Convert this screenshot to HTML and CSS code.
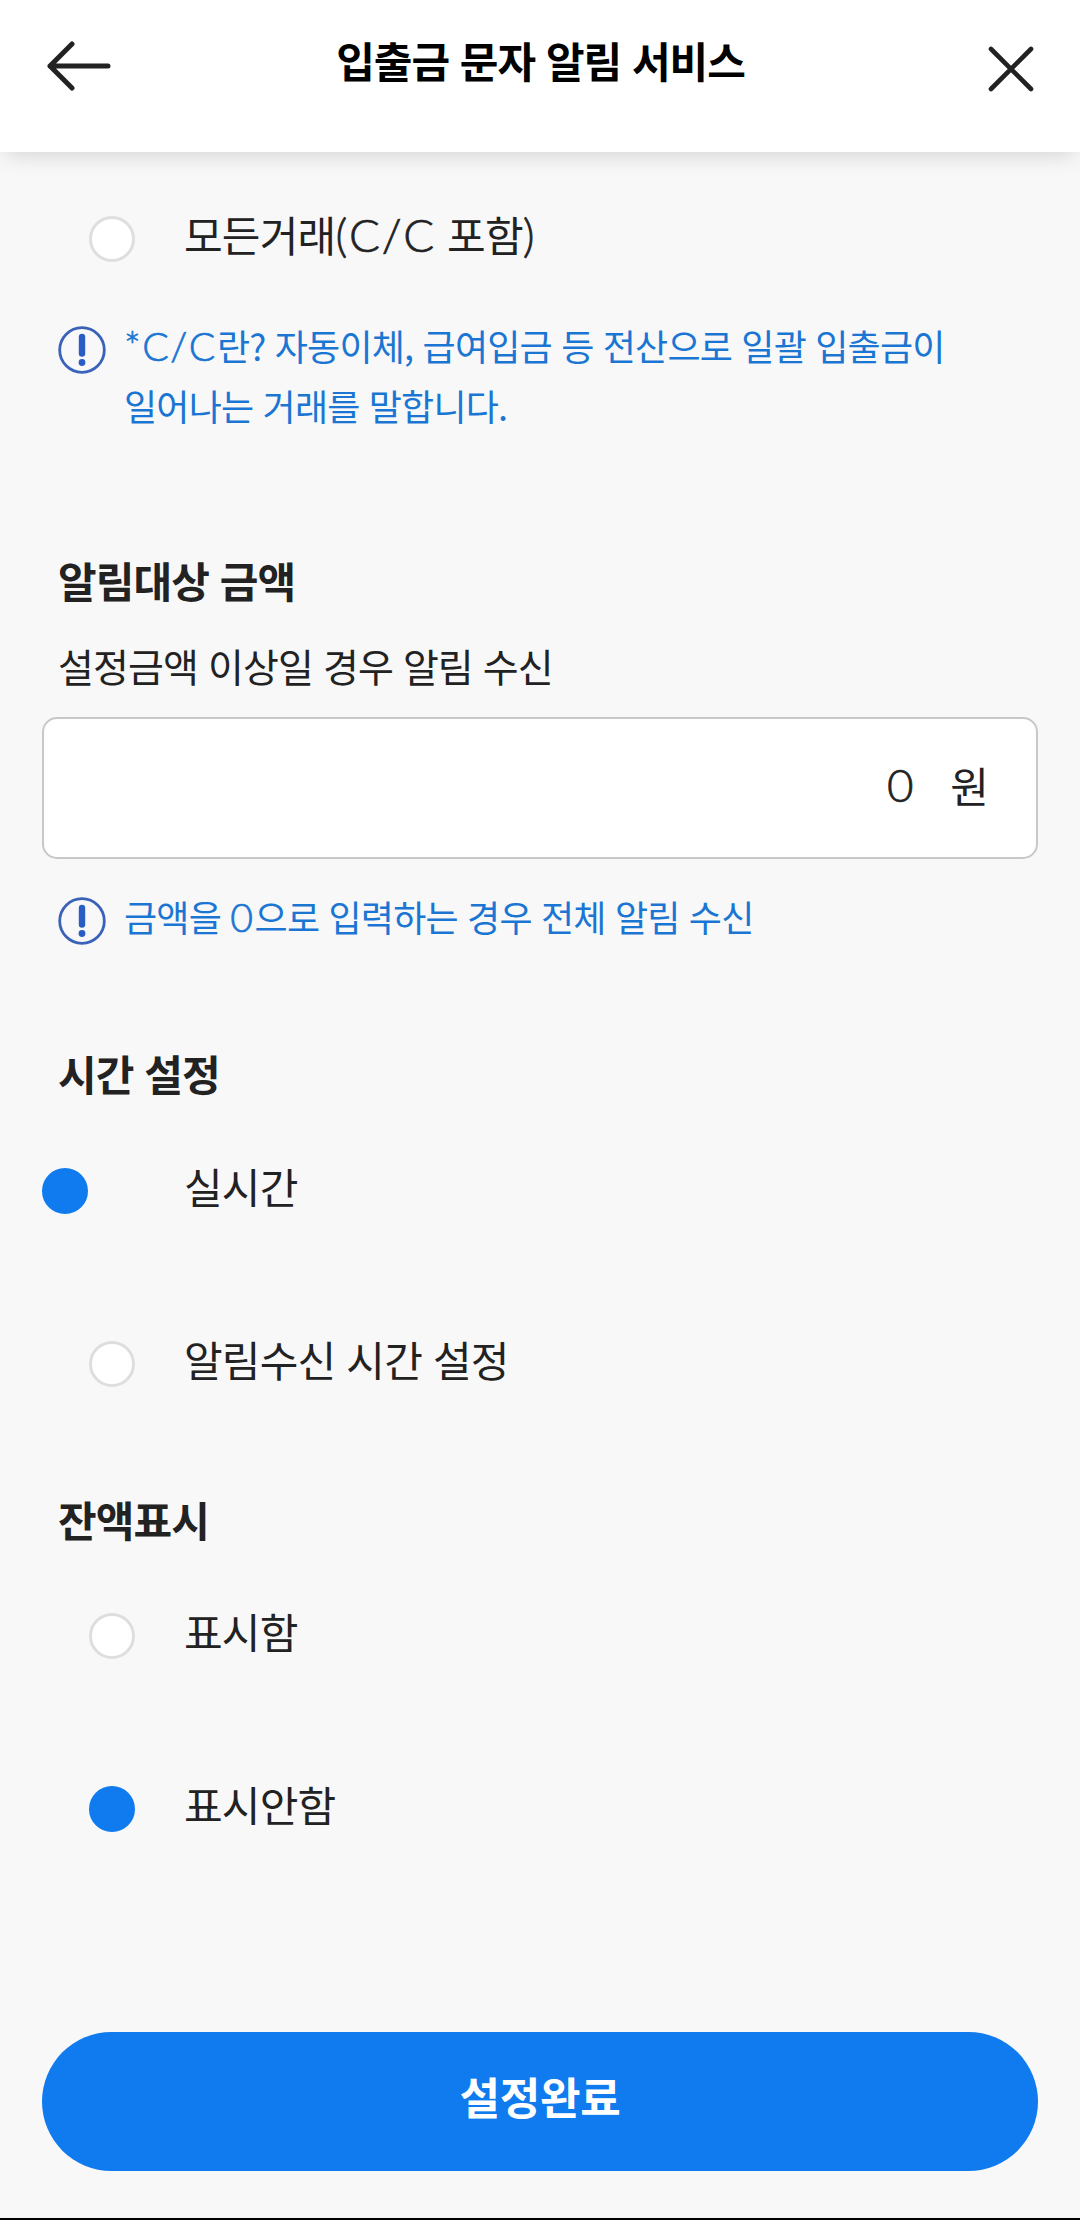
FILE: index.html
```html
<!DOCTYPE html>
<html lang="ko">
<head>
  <meta charset="UTF-8">
  <meta name="viewport" content="width=device-width, initial-scale=1.0">
  <title>입출금 문자 알림 서비스</title>
  <link rel="stylesheet" href="styles.css">
</head>
<body>
  <header class="header">
    <svg class="icon-back" viewBox="0 0 64 50" fill="none" stroke="#222" stroke-width="5" stroke-linecap="round" stroke-linejoin="round">
      <path d="M61 25H3M25 3L3 25L25 47"/>
    </svg>
    <h1 class="title">입출금 문자 알림 서비스</h1>
    <svg class="icon-close" viewBox="0 0 46 46" fill="none" stroke="#222" stroke-width="4.6" stroke-linecap="round">
      <path d="M3 3L43 43M43 3L3 43"/>
    </svg>
  </header>

  <main class="content">
    <div class="radio-row first">
      <span class="radio"></span>
      <span class="label">모든거래<span class="latin">(C/C</span> 포함<span class="latin">)</span></span>
    </div>

    <div class="notice">
      <svg class="icon-info" viewBox="0 0 48 48">
        <circle cx="24" cy="24" r="22.3" fill="none" stroke="#3a62b8" stroke-width="2.8"/>
        <path d="M24 11V27.5" stroke="#2b5cc4" stroke-width="6.4" stroke-linecap="round"/>
        <circle cx="24" cy="36.5" r="3.4" fill="#2b5cc4"/>
      </svg>
      <p><span class="latin">*C/C</span>란? 자동이체, 급여입금 등 전산으로 일괄 입출금이<br>일어나는 거래를 말합니다.</p>
    </div>

    <!-- 알림대상 금액 -->
    <section class="amount">
      <h2>알림대상 금액</h2>
      <p class="desc">설정금액 이상일 경우 알림 수신</p>
      <div class="amount-box">
        <span class="amount-value latin">0</span>
        <span class="amount-unit">원</span>
      </div>
      <div class="notice">
        <svg class="icon-info" viewBox="0 0 48 48">
          <circle cx="24" cy="24" r="22.3" fill="none" stroke="#3a62b8" stroke-width="2.8"/>
          <path d="M24 11V27.5" stroke="#2b5cc4" stroke-width="6.4" stroke-linecap="round"/>
          <circle cx="24" cy="36.5" r="3.4" fill="#2b5cc4"/>
        </svg>
        <p>금액을 <span class="latin">0</span>으로 입력하는 경우 전체 알림 수신</p>
      </div>
    </section>

    <!-- 시간 설정 -->
    <section class="time">
      <h2>시간 설정</h2>
      <div class="radio-row outdent">
        <span class="radio checked"></span>
        <span class="label">실시간</span>
      </div>
      <div class="radio-row">
        <span class="radio"></span>
        <span class="label">알림수신 시간 설정</span>
      </div>
    </section>

    <!-- 잔액표시 -->
    <section class="balance">
      <h2>잔액표시</h2>
      <div class="radio-row">
        <span class="radio"></span>
        <span class="label">표시함</span>
      </div>
      <div class="radio-row">
        <span class="radio checked"></span>
        <span class="label">표시안함</span>
      </div>
    </section>

    <button class="submit">설정완료</button>
  </main>
</body>
</html>
```

FILE: styles.css
```css
* {
  box-sizing: border-box;
}

body {
  margin: 0;
  height: 2220px;
  display: flex;
  flex-direction: column;
  font-family: "Noto Sans CJK KR", sans-serif;
  color: #222;
  background-color: #f8f8f8;
  border-bottom: 2px solid #000;
}

h1, h2, p {
  margin: 0;
}

.header {
  height: 152px;
  flex: none;
  padding: 0 46px 28px 47px;
  display: flex;
  justify-content: space-between;
  align-items: center;
  background: #fff;
  box-shadow: 0 8px 22px -6px rgba(0,0,0,0.16);
}

.icon-back {
  width: 64px;
  height: 50px;
  margin-top: 7px;
}

.title {
  margin-top: -5px;
  margin-left: -18px;
  font-size: 42px;
  line-height: 60px;
  font-weight: 700;
  letter-spacing: -1px;
  color: #000;
}

.icon-close {
  width: 46px;
  height: 46px;
  margin-top: 13px;
}

.content {
  padding: 64px 42px 0;
}

.radio-row {
  height: 46px;
  padding-left: 47px;
  display: flex;
  align-items: center;
  gap: 49px;
}

.radio-row + .radio-row {
  margin-top: 127px;
}

.radio-row.outdent {
  padding-left: 0;
  gap: 96px;
}

.radio {
  width: 46px;
  height: 46px;
  flex: none;
  border: 3px solid #dedede;
  border-radius: 50%;
  background: #fff;
}

.radio.checked {
  border-color: #107bef;
  background: #107bef;
}

.label {
  margin-top: -11px;
  font-size: 42px;
  line-height: 46px;
  letter-spacing: -0.8px;
}

.latin {
  font-family: Lato, "Noto Sans CJK KR", sans-serif;
  font-size: 1.09em;
  font-weight: 300;
  line-height: 0;
  letter-spacing: 0.04em;
  -webkit-text-stroke: 0.7px currentColor;
}

.notice {
  padding-left: 16px;
  display: flex;
  gap: 18px;
  color: #1a76d2;
}

.notice p {
  font-size: 36px;
  line-height: 60px;
  letter-spacing: -0.8px;
  white-space: nowrap;
}

.icon-info {
  width: 48px;
  height: 48px;
  flex: none;
  margin-top: 11px;
}

.first + .notice {
  margin-top: 53px;
}

h2 {
  padding-left: 16px;
  font-size: 42px;
  line-height: 60px;
  font-weight: 700;
  letter-spacing: -0.9px;
}

.amount {
  margin-top: 115px;
}

.desc {
  margin: 30px 0 27px;
  padding-left: 16px;
  font-size: 39px;
  line-height: 50px;
  letter-spacing: -0.9px;
}

.amount-box {
  height: 142px;
  margin-bottom: 27px;
  padding: 0 47px 7px 0;
  display: flex;
  justify-content: flex-end;
  align-items: center;
  gap: 35px;
  font-size: 42px;
  line-height: 60px;
  border: 2px solid #c8c8c8;
  border-radius: 15px;
  background: #fff;
}

.time {
  margin-top: 97px;
}

.time h2 {
  margin-bottom: 65px;
}

.balance {
  margin-top: 102px;
}

.balance h2 {
  margin-bottom: 64px;
}

.submit {
  display: block;
  width: 100%;
  height: 139px;
  margin-top: 200px;
  padding: 0 0 12px;
  border: none;
  border-radius: 70px;
  background: #107bef;
  color: #fff;
  font-family: inherit;
  font-size: 44px;
  font-weight: 700;
  letter-spacing: -0.2px;
}
```
